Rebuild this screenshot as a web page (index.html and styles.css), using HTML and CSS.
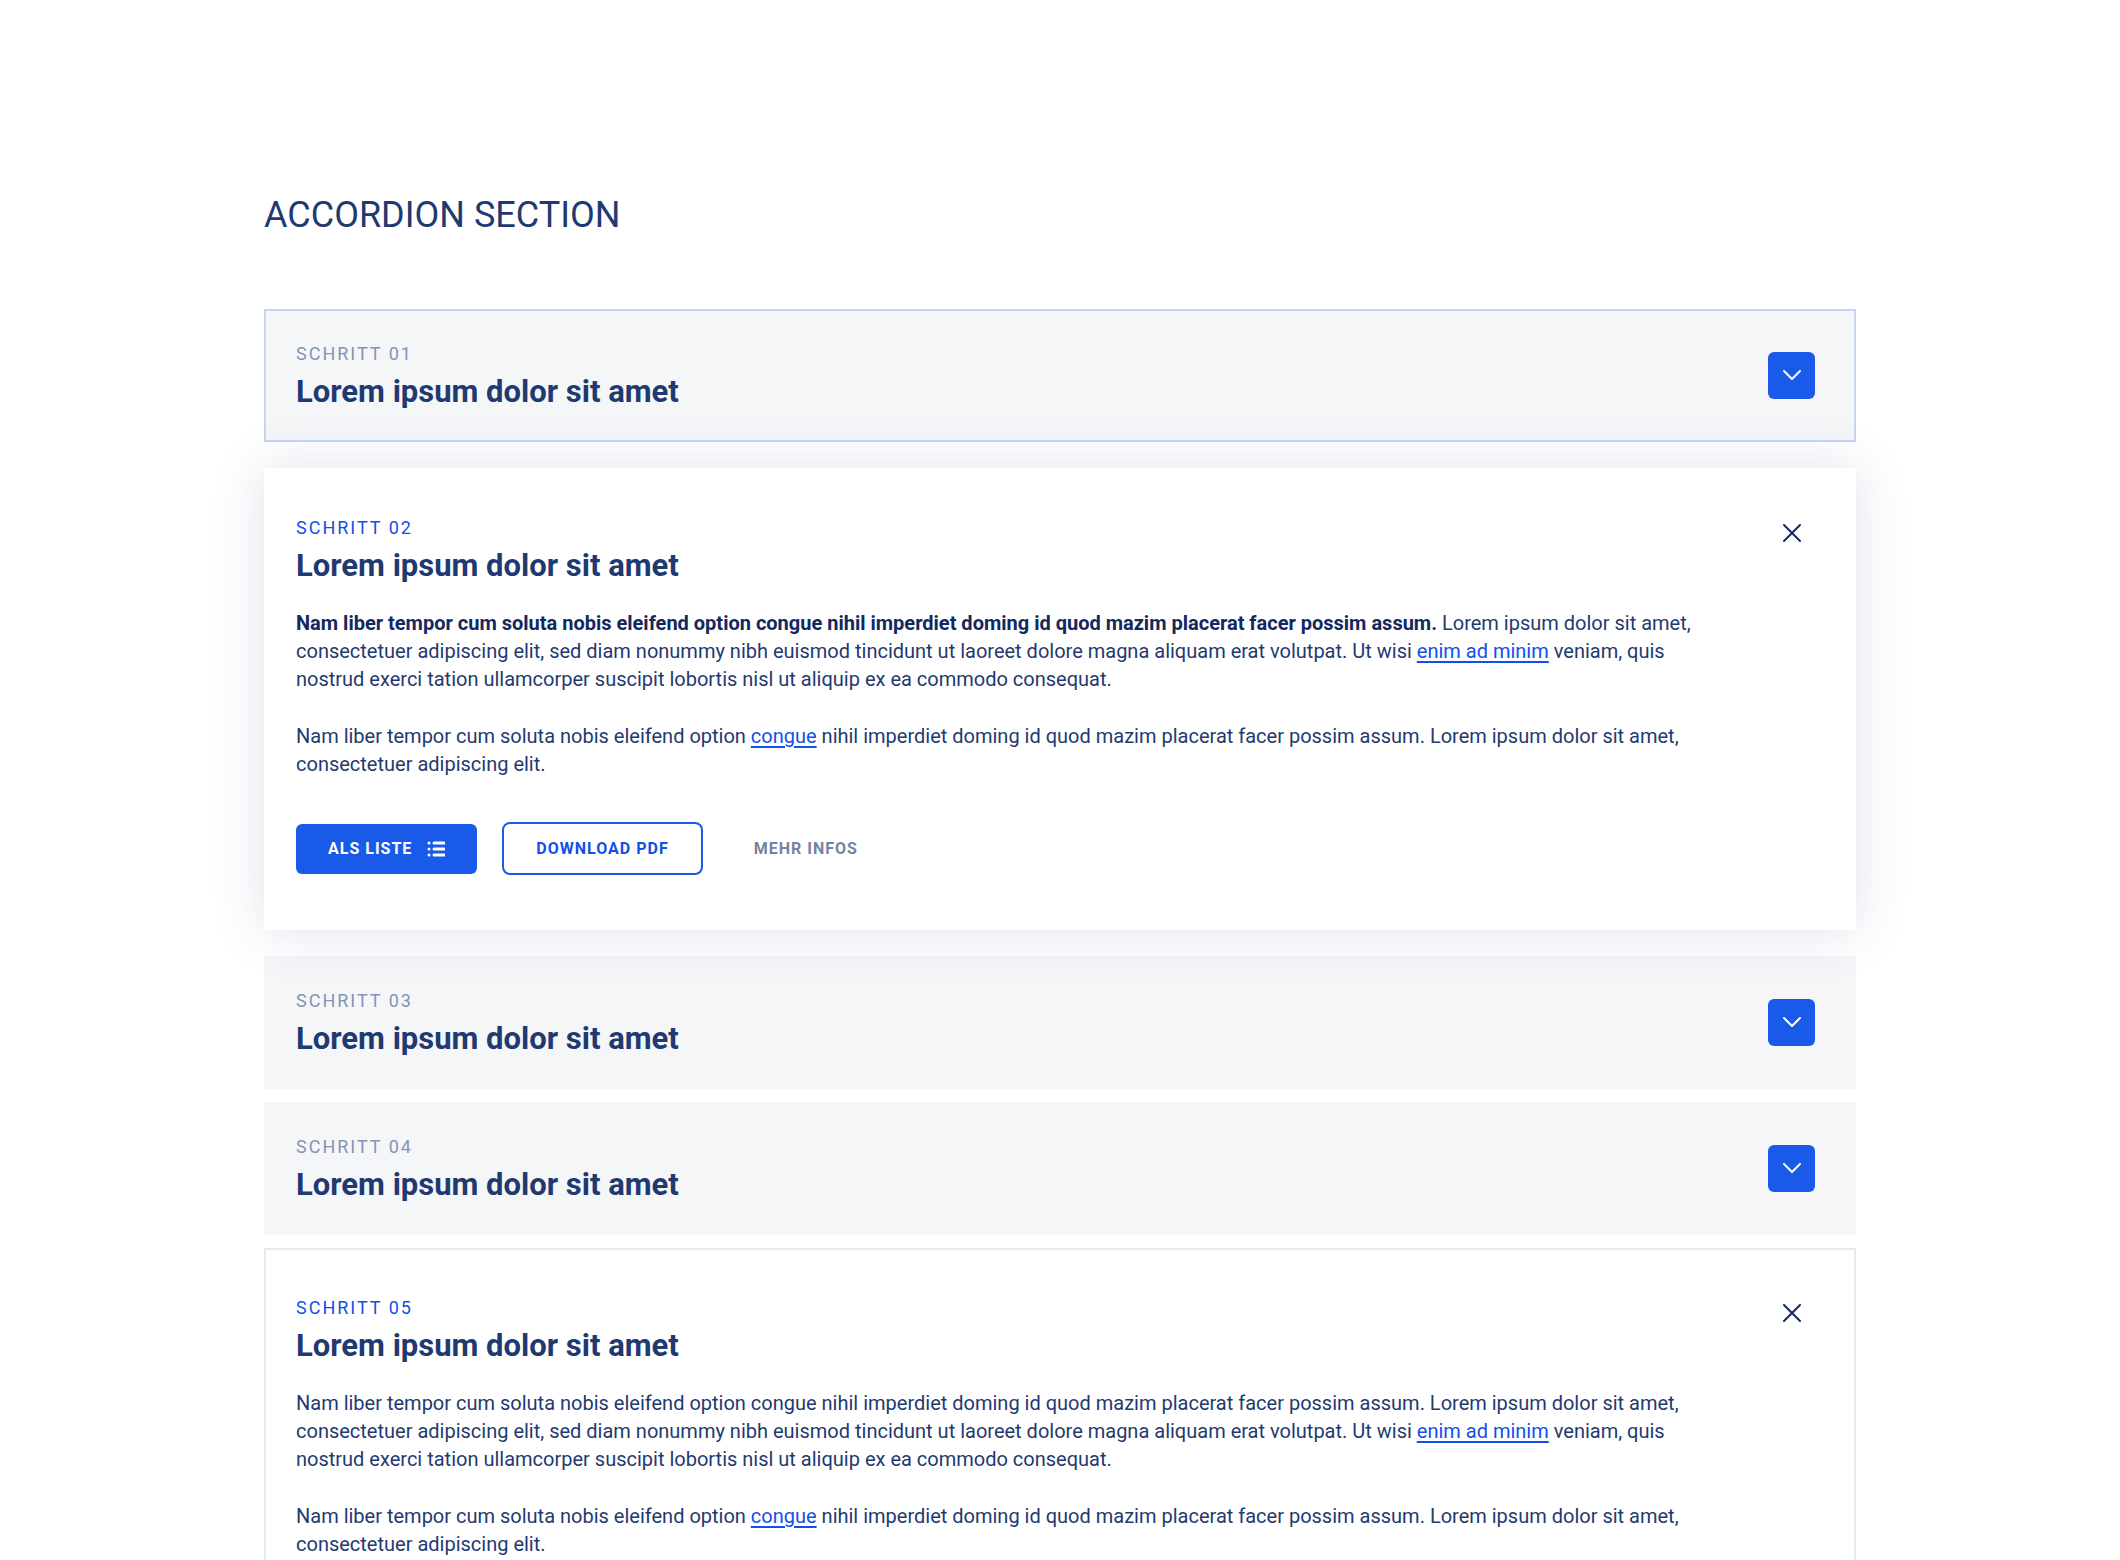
FILE: index.html
```html
<!doctype html>
<html lang="de">
<head>
	<meta charset="utf-8">
	<meta name="viewport" content="width=device-width, initial-scale=1">
	<title>Accordion Section</title>
	<link rel="stylesheet" href="styles.css">
</head>
<body>

	<main class="section">
		<h1 class="section-title">ACCORDION SECTION</h1>

		<div class="accordion">

			<section class="panel panel-hover">
				<header class="panel-header">
					<div>
						<p class="step">SCHRITT 01</p>
						<h2 class="panel-title">Lorem ipsum dolor sit amet</h2>
					</div>
					<button class="toggle" type="button" aria-expanded="false" aria-label="Schritt 01">
						<svg viewBox="0 0 20 12" width="20" height="12"><path d="M2 2l8 8 8-8"/></svg>
					</button>
				</header>
			</section>

			<section class="panel panel-open panel-active">
				<header class="panel-header">
					<div>
						<p class="step">SCHRITT 02</p>
						<h2 class="panel-title">Lorem ipsum dolor sit amet</h2>
					</div>
					<button class="toggle" type="button" aria-expanded="true" aria-label="Schritt 02">
						<svg viewBox="0 0 20 20" width="20" height="20"><path d="M2 2l16 16M18 2L2 18"/></svg>
					</button>
				</header>
				<div class="panel-body">
					<p><strong>Nam liber tempor cum soluta nobis eleifend option congue nihil imperdiet doming id quod mazim placerat facer possim assum.</strong> Lorem ipsum dolor sit amet,<br>
					consectetuer adipiscing elit, sed diam nonummy nibh euismod tincidunt ut laoreet dolore magna aliquam erat volutpat. Ut wisi <a href="#">enim ad minim</a> veniam, quis<br>
					nostrud exerci tation ullamcorper suscipit lobortis nisl ut aliquip ex ea commodo consequat.</p>
					<p>Nam liber tempor cum soluta nobis eleifend option <a href="#">congue</a> nihil imperdiet doming id quod mazim placerat facer possim assum. Lorem ipsum dolor sit amet,<br>
					consectetuer adipiscing elit.</p>
				</div>
				<div class="actions">
					<button class="btn btn-primary" type="button">
						ALS LISTE
						<svg viewBox="0 0 18 16" width="18" height="16">
							<path d="M7 2h10M7 8h10M7 14h10"/>
							<path d="M2 2h0M2 8h0M2 14h0"/>
						</svg>
					</button>
					<button class="btn btn-outline" type="button">DOWNLOAD PDF</button>
					<button class="btn btn-text" type="button">MEHR INFOS</button>
				</div>
			</section>

			<section class="panel">
				<header class="panel-header">
					<div>
						<p class="step">SCHRITT 03</p>
						<h2 class="panel-title">Lorem ipsum dolor sit amet</h2>
					</div>
					<button class="toggle" type="button" aria-expanded="false" aria-label="Schritt 03">
						<svg viewBox="0 0 20 12" width="20" height="12"><path d="M2 2l8 8 8-8"/></svg>
					</button>
				</header>
			</section>

			<section class="panel">
				<header class="panel-header">
					<div>
						<p class="step">SCHRITT 04</p>
						<h2 class="panel-title">Lorem ipsum dolor sit amet</h2>
					</div>
					<button class="toggle" type="button" aria-expanded="false" aria-label="Schritt 04">
						<svg viewBox="0 0 20 12" width="20" height="12"><path d="M2 2l8 8 8-8"/></svg>
					</button>
				</header>
			</section>

			<section class="panel panel-open">
				<header class="panel-header">
					<div>
						<p class="step">SCHRITT 05</p>
						<h2 class="panel-title">Lorem ipsum dolor sit amet</h2>
					</div>
					<button class="toggle" type="button" aria-expanded="true" aria-label="Schritt 05">
						<svg viewBox="0 0 20 20" width="20" height="20"><path d="M2 2l16 16M18 2L2 18"/></svg>
					</button>
				</header>
				<div class="panel-body">
					<p>Nam liber tempor cum soluta nobis eleifend option congue nihil imperdiet doming id quod mazim placerat facer possim assum. Lorem ipsum dolor sit amet,<br>
					consectetuer adipiscing elit, sed diam nonummy nibh euismod tincidunt ut laoreet dolore magna aliquam erat volutpat. Ut wisi <a href="#">enim ad minim</a> veniam, quis<br>
					nostrud exerci tation ullamcorper suscipit lobortis nisl ut aliquip ex ea commodo consequat.</p>
					<p>Nam liber tempor cum soluta nobis eleifend option <a href="#">congue</a> nihil imperdiet doming id quod mazim placerat facer possim assum. Lorem ipsum dolor sit amet,<br>
					consectetuer adipiscing elit.</p>
				</div>
			</section>

		</div>
	</main>

</body>
</html>
```
FILE: styles.css
```css
:root {
	--navy: #1f3a70;
	--navy-dark: #12285f;
	--blue: #1a5ae8;
	--link: #1250e8;
	--muted: #8494b6;
	--panel: #f4f6f8;
}

* {
	box-sizing: border-box;
}
body {
	margin: 0;
	background-color: #fff;
	color: var(--navy);
	font-family: Roboto, "Liberation Sans", sans-serif;
	font-size: 20px;
	line-height: 28px;
}
h1, h2, p {
	margin: 0;
}
button {
	font: inherit;
	cursor: pointer;
}
svg {
	fill: none;
	stroke: currentColor;
	stroke-width: 2;
	stroke-linecap: round;
	stroke-linejoin: round;
}

.section {
	max-width: 1592px;
	margin: 0 auto;
	padding-top: 191px;
}
.section-title {
	margin-bottom: 70px;
	font-size: 36px;
	font-weight: 400;
	line-height: 48px;
}

/* accordion */
.accordion {
	display: flex;
	flex-direction: column;
	gap: 13px;
}
.panel {
	padding: 29px 39px 24px 30px;
	border: 2px solid var(--panel);
	background-color: var(--panel);
}
.panel-hover {
	border-color: #c6d4f4;
}
.panel-open {
	padding-top: 44px;
	padding-bottom: 53px;
	border-color: #e6eaf1;
	background-color: #fff;
}
.panel-active {
	position: relative;
	margin: 13px 0;
	border-color: #fff;
	box-shadow: 0 0 50px rgba(31, 58, 112, .15);
}
.panel-header {
	display: flex;
	justify-content: space-between;
	align-items: center;
}
.step {
	color: var(--muted);
	font-size: 18px;
	letter-spacing: 2px;
}
.panel-open .step {
	color: var(--link);
}
.panel-title {
	font-size: 31px;
	font-weight: 700;
	line-height: 48px;
}
.toggle {
	display: flex;
	justify-content: center;
	align-items: center;
	width: 47px;
	height: 47px;
	margin-bottom: 6px;
	padding: 0;
	border: 0;
	border-radius: 6px;
	background-color: var(--blue);
	color: #fff;
}
.panel-open .panel-header {
	align-items: flex-start;
}
.panel-open .toggle {
	height: 38px;
	background: none;
	color: var(--navy-dark);
}

.panel-body {
	margin-top: 19px;
}
.panel-body p + p {
	margin-top: 29px;
}
.panel-body strong {
	color: var(--navy-dark);
}
.panel-body a {
	color: var(--link);
	text-underline-offset: 3px;
}

/* buttons */
.actions {
	display: flex;
	align-items: center;
	gap: 25px;
	margin-top: 44px;
}
.btn {
	display: flex;
	align-items: center;
	gap: 15px;
	height: 50px;
	padding: 0 32px;
	border: 0;
	border-radius: 6px;
	background: none;
	font-size: 16px;
	font-weight: 700;
	letter-spacing: 1px;
}
.btn-primary {
	background-color: var(--blue);
	color: #fff;
}
.btn-primary svg {
	stroke-width: 3;
}
.btn-outline {
	height: 53px;
	border: 2px solid var(--blue);
	border-radius: 8px;
	color: var(--link);
}
.btn-text {
	padding: 0 26px;
	color: #7583a2;
}
```
